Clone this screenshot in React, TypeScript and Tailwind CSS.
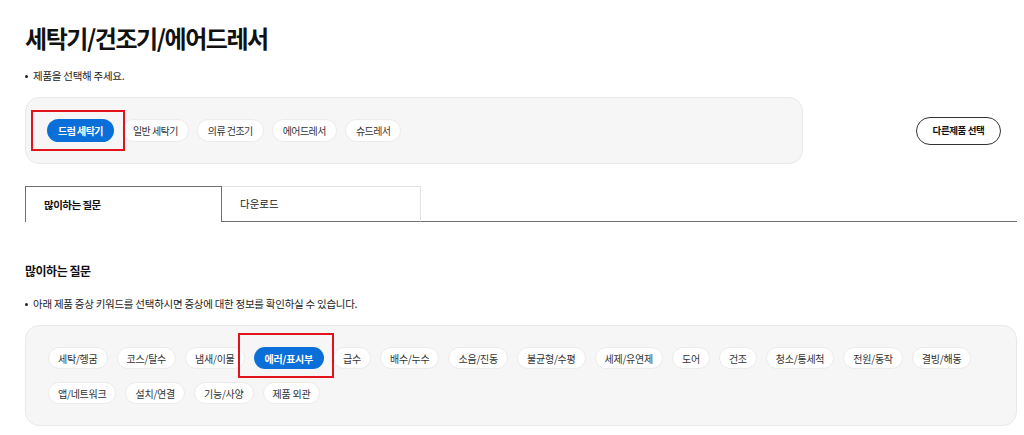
import React from 'react';

const products = ['드럼 세탁기', '일반 세탁기', '의류 건조기', '에어드레서', '슈드레서'];

const keywords = [
  '세탁/헹굼', '코스/탈수', '냄새/이물', '에러/표시부', '급수', '배수/누수', '소음/진동',
  '불균형/수평', '세제/유연제', '도어', '건조', '청소/통세척', '전원/동작', '결빙/해동',
  '앱/네트워크', '설치/연결', '기능/사양', '제품 외관',
];

const Bullet: React.FC<{ children: React.ReactNode }> = ({ children }) => (
  <p className="flex items-center text-[10.5px] tracking-[-0.025em] text-[#222] leading-[14px]">
    <span className="w-[3px] h-[3px] rounded-full bg-[#222] mr-[5px]" />
    {children}
  </p>
);

// red outline marking the currently picked chip
const Marker: React.FC<{ className: string }> = ({ className }) => (
  <span className={`absolute border-2 border-[#e3131b] pointer-events-none ${className}`} />
);

export default function App() {
  const activeProduct = '드럼 세탁기';
  const activeKeyword = '에러/표시부';

  return (
    <div className="w-[1024px] h-[435px] overflow-hidden bg-white pl-[25px] pr-[7px] text-[#222] font-['Noto_Sans_CJK_KR','Noto_Sans',sans-serif]">
      <h1 className="pt-[22px] text-[24px] leading-[32px] font-bold tracking-[-0.06em] text-[#111]">세탁기/건조기/에어드레서</h1>

      <div className="mt-[15px]">
        <Bullet>제품을 선택해 주세요.</Bullet>
      </div>

      <div className="flex items-center mt-[14px]">
        <div className="w-[778px] h-[67px] rounded-[14px] bg-[#f6f6f6] border border-[#e9e9e9] flex items-center gap-[8px] pl-[21px] tracking-[-0.035em]">
          {products.map((p) =>
            p === activeProduct ? (
              <span key={p} className="relative">
                <span className="h-[23px] px-[11px] rounded-full bg-[#0b6fd9] text-white text-[10px] font-bold flex items-center">
                  {p}
                </span>
                <Marker className="-left-[16px] -right-[11px] -top-[9px] -bottom-[9px]" />
              </span>
            ) : (
              <span key={p} className="h-[23px] px-[10px] rounded-full bg-white border border-[#ebebeb] text-[10px] text-[#333] flex items-center">
                {p}
              </span>
            )
          )}
        </div>
        <button className="ml-auto mr-[16px] h-[28px] w-[85px] rounded-full border border-[#333] text-[9.5px] tracking-[-0.04em] font-bold text-[#111] flex items-center justify-center">
          다른제품 선택
        </button>
      </div>

      <div className="flex mt-[22px] h-[36px]">
        <div className="w-[197px] border border-b-0 border-[#707070] bg-white flex items-center pl-[18px] text-[10.5px] tracking-[-0.05em] font-bold text-[#111]">
          많이하는 질문
        </div>
        <div className="w-[199px] border-t border-r border-b border-t-[#e3e3e3] border-r-[#e3e3e3] border-b-[#707070] flex items-center pl-[18px] text-[10.5px] text-[#222]">
          다운로드
        </div>
        <div className="flex-1 border-b border-[#707070]" />
      </div>

      <h2 className="mt-[41px] text-[12px] leading-[16px] font-bold tracking-[-0.04em] text-[#111]">많이하는 질문</h2>

      <div className="mt-[18px]">
        <Bullet>아래 제품 증상 키워드를 선택하시면 증상에 대한 정보를 확인하실 수 있습니다.</Bullet>
      </div>

      <div className="mt-[14px] h-[101px] rounded-[14px] bg-[#f6f6f6] border border-[#e9e9e9] pt-[21px] pl-[22px] pr-[20px] flex flex-wrap content-start gap-x-[9px] gap-y-[13px] tracking-[-0.015em]">
        {keywords.map((k) =>
          k === activeKeyword ? (
            <span key={k} className="relative">
              <span className="h-[22px] px-[11px] rounded-full bg-[#0b6fd9] text-white text-[10px] font-bold flex items-center">
                {k}
              </span>
              <Marker className="-left-[16px] -right-[10px] -top-[14px] -bottom-[9px]" />
            </span>
          ) : (
            <span key={k} className="h-[22px] px-[9px] rounded-full bg-white border border-[#ebebeb] text-[10px] text-[#333] flex items-center">
              {k}
            </span>
          )
        )}
      </div>
    </div>
  );
}
